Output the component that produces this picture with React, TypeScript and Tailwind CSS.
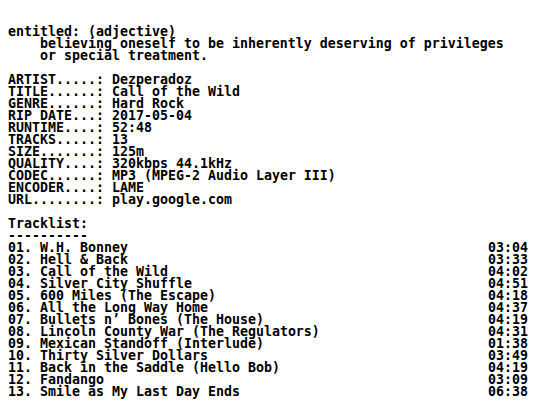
const info: [string, string][] = [
  ["ARTIST.....", "Dezperadoz"],
  ["TITLE......", "Call of the Wild"],
  ["GENRE......", "Hard Rock"],
  ["RIP DATE...", "2017-05-04"],
  ["RUNTIME....", "52:48"],
  ["TRACKS.....", "13"],
  ["SIZE.......", "125m"],
  ["QUALITY....", "320kbps 44.1kHz"],
  ["CODEC......", "MP3 (MPEG-2 Audio Layer III)"],
  ["ENCODER....", "LAME"],
  ["URL........", "play.google.com"],
]

const tracks: [string, string][] = [
  ["W.H. Bonney", "03:04"],
  ["Hell & Back", "03:33"],
  ["Call of the Wild", "04:02"],
  ["Silver City Shuffle", "04:51"],
  ["600 Miles (The Escape)", "04:18"],
  ["All the Long Way Home", "04:37"],
  ["Bullets n’ Bones (The House)", "04:19"],
  ["Lincoln County War (The Regulators)", "04:31"],
  ["Mexican Standoff (Interlude)", "01:38"],
  ["Thirty Silver Dollars", "03:49"],
  ["Back in the Saddle (Hello Bob)", "04:19"],
  ["Fandango", "03:09"],
  ["Smile as My Last Day Ends", "06:38"],
]

export default function App() {
  return (
    <main className="w-[536px] h-[420px] bg-white text-black overflow-hidden pl-2 pt-[26px] font-['DejaVu_Sans_Mono',monospace] font-bold text-[13.29px] leading-[12px] whitespace-pre">
      <div>entitled: (adjective)</div>
      <div>    believing oneself to be inherently deserving of privileges</div>
      <div>    or special treatment.</div>
      <div> </div>
      {info.map(([k, v]) => (
        <div key={k}>
          {k}: {v}
        </div>
      ))}
      <div> </div>
      <div>Tracklist:</div>
      <div>----------</div>
      {tracks.map(([name, time], i) => (
        <div key={name} className="flex justify-between w-[520px]">
          <span>
            {String(i + 1).padStart(2, "0")}. {name}
          </span>
          <span>{time}</span>
        </div>
      ))}
    </main>
  )
}
